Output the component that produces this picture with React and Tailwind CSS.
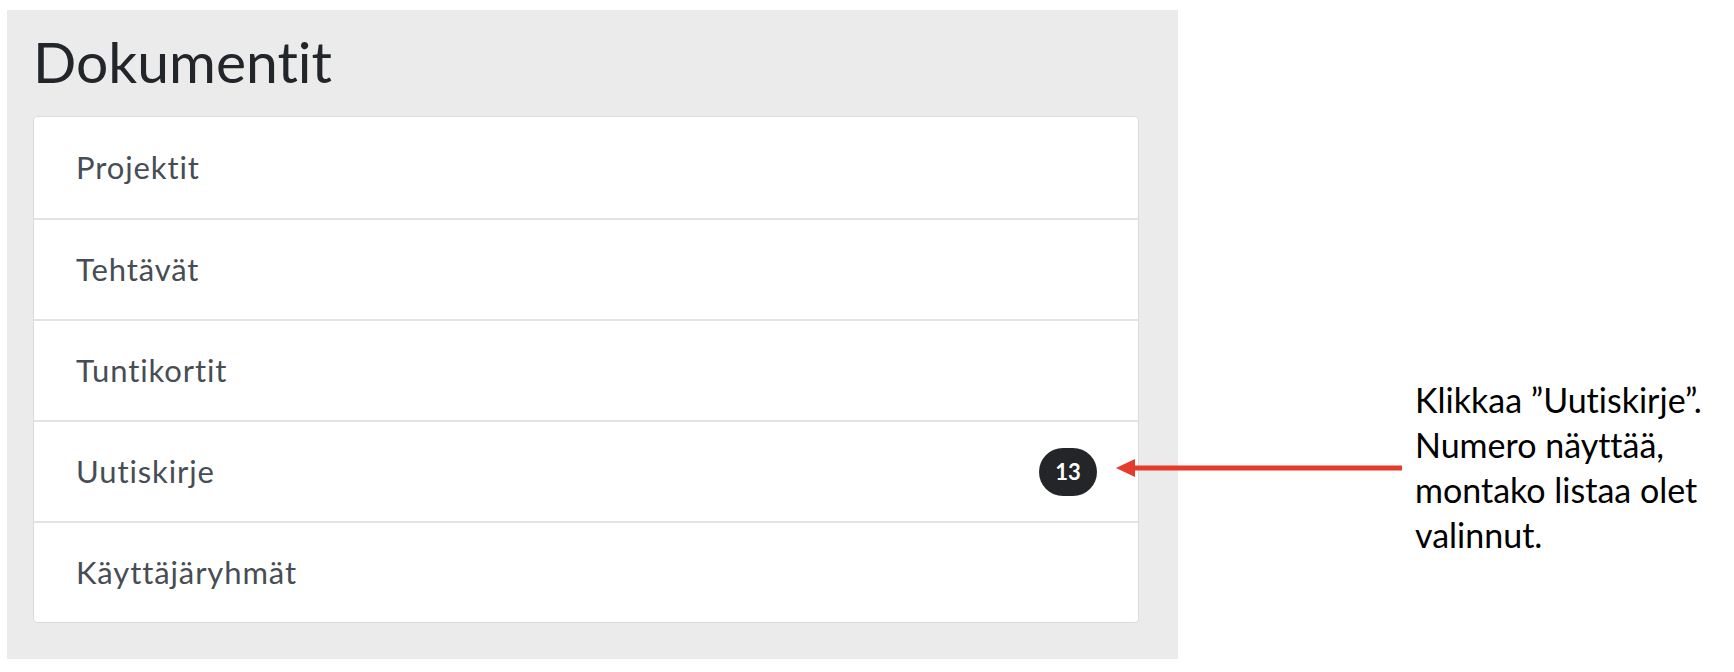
import React from "react";

const rows = [
  { label: "Projektit" },
  { label: "Tehtävät" },
  { label: "Tuntikortit" },
  { label: "Uutiskirje", count: 13 },
  { label: "Käyttäjäryhmät" },
];

function App() {
  return (
    <div className="relative flex min-h-[672px] w-[1734px] bg-white [font-variant-ligatures:none]">
      <div className="ml-[7px] mt-[10px] h-[649px] w-[1171px] bg-[#ebebeb] pl-[26px] pr-[39px] pt-[18px] font-['Lato',sans-serif]">
        <h1 className="mb-[22px] text-[57px] leading-[66px] text-[#222529]">Dokumentit</h1>
        <div className="overflow-hidden rounded-[4px] border border-[#dcdcdc] bg-white">
          {rows.map((row, i) => (
            <div
              key={row.label}
              className={
                "flex h-[101px] items-center justify-between pl-[42px] pr-[41px] " +
                (i > 0 ? "border-t-2 border-[#e3e3e3]" : "")
              }
            >
              <span className="text-[31px] tracking-[0.9px] text-[#474d55]">{row.label}</span>
              {row.count && (
                <span className="flex h-[48px] w-[58px] items-center justify-center rounded-full bg-[#232529] text-[22px] font-bold text-white">
                  {row.count}
                </span>
              )}
            </div>
          ))}
        </div>
      </div>

      <div className="ml-[237px] mt-[377px] font-['Lato',sans-serif] text-[34px] leading-[45px] text-black">
        <p>Klikkaa ”Uutiskirje”.</p>
        <p>Numero näyttää,</p>
        <p>montako listaa olet</p>
        <p>valinnut.</p>
      </div>

      {/* annotation arrow */}
      <svg
        className="absolute left-[1116px] top-[458px]"
        width="286"
        height="20"
        viewBox="0 0 286 20"
      >
        <line x1="14" y1="10" x2="286" y2="10" stroke="#e63a2b" strokeWidth="5" />
        <polygon points="0,10 19,1 19,19" fill="#e63a2b" />
      </svg>
    </div>
  );
}

export default App;
